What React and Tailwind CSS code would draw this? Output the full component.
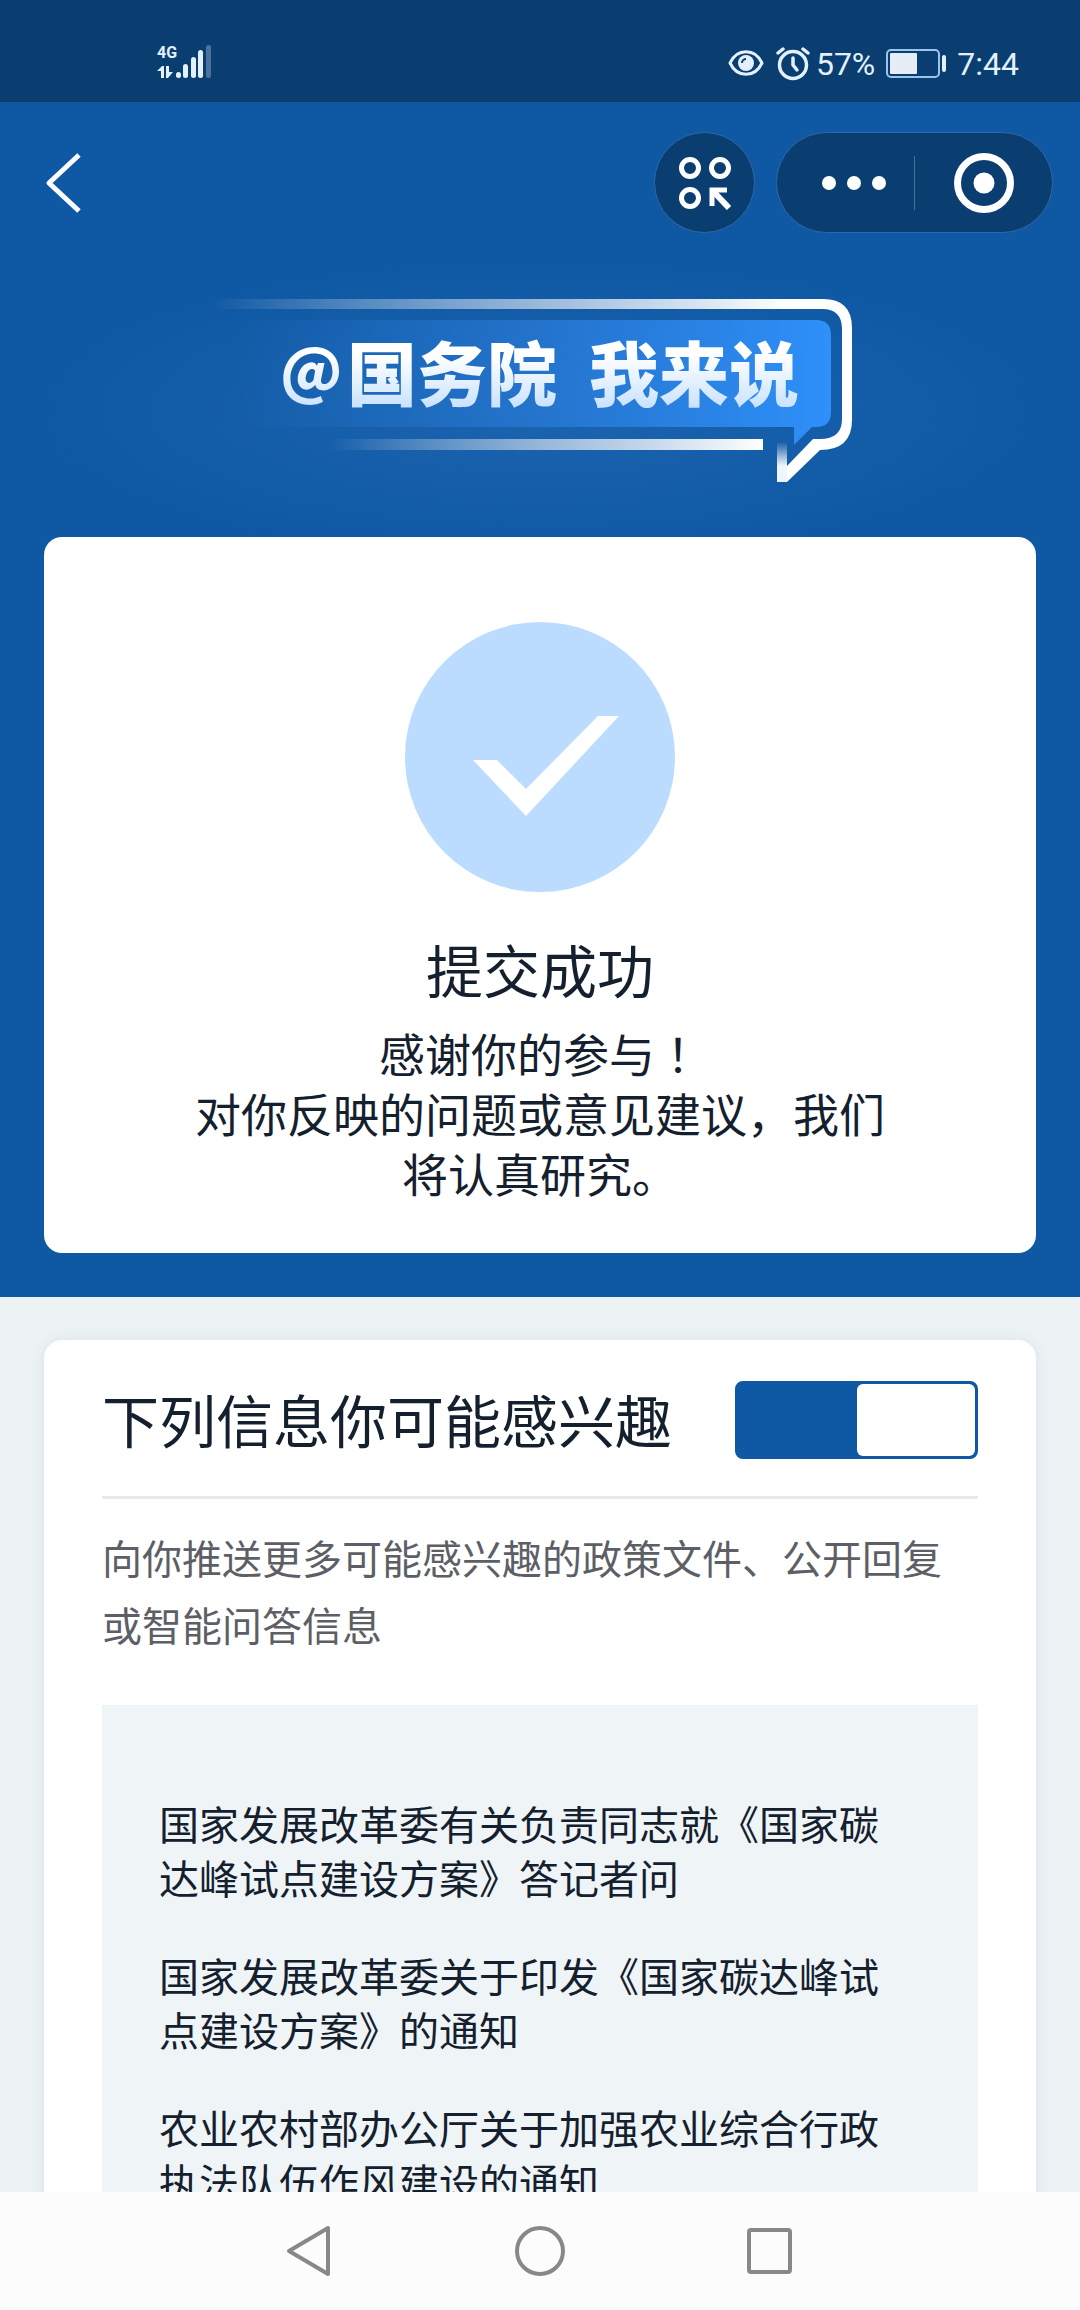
import React from 'react';

const articles = [
  '国家发展改革委有关负责同志就《国家碳达峰试点建设方案》答记者问',
  '国家发展改革委关于印发《国家碳达峰试点建设方案》的通知',
  '农业农村部办公厅关于加强农业综合行政执法队伍作风建设的通知',
];

function SignalIcon() {
  return (
    <svg width="54" height="36" viewBox="0 0 54 36" aria-hidden="true" fill="#e3f0fd">
      <path d="M0 27 L5 22 H7 V34 H4 V27 Z" />
      <path d="M9 22 H12 V28 H16 L11 34 H9 Z" />
      <rect x="19" y="28" width="5" height="6" rx="2.5" />
      <rect x="26" y="20" width="5" height="14" rx="2.5" />
      <rect x="34" y="13" width="5" height="21" rx="2.5" />
      <rect x="41" y="6" width="5" height="28" rx="2.5" />
      <rect x="49" y="1" width="5" height="33" rx="2.5" opacity="0.3" />
    </svg>
  );
}

function StatusBar() {
  return (
    <div className="flex h-[102px] shrink-0 items-start justify-between bg-[#0a3d70] pr-[61px] pl-[157px] font-[Roboto,sans-serif] text-[#e3f0fd]">
      <div className="grid pt-[44px]">
        <span className="col-start-1 row-start-1 text-[16px] leading-[18px] font-bold">4G</span>
        <div className="col-start-1 row-start-1">
          <SignalIcon />
        </div>
      </div>
      <div className="flex items-center pt-[44px] text-[32px] leading-[40px]">
        <svg width="36" height="28" viewBox="0 0 36 28" fill="none" stroke="currentColor" aria-hidden="true">
          <path d="M2 13 C9 -2 27 -2 34 13 C27 28 9 28 2 13 Z" strokeWidth="3" strokeLinejoin="round" />
          <circle cx="18" cy="13" r="8" fill="currentColor" stroke="none" />
          <path d="M14 13 A4 4 0 0 1 18 9" stroke="#0a3d70" strokeWidth="2" />
        </svg>
        <svg className="ml-3" width="34" height="34" viewBox="0 0 34 34" fill="none" stroke="currentColor" strokeLinecap="round" aria-hidden="true">
          <circle cx="17" cy="18" r="13.5" strokeWidth="3.5" />
          <path d="M17 11 V18 L21 23" strokeWidth="3.5" />
          <path d="M2 6 L7 2 M27 2 L32 6" strokeWidth="3.5" />
        </svg>
        <span className="ml-[6px]">57%</span>
        <svg className="ml-[11px]" width="61" height="30" viewBox="0 0 61 30" aria-hidden="true">
          <rect x="1" y="1" width="52" height="27" rx="4" fill="none" stroke="#9cc4ec" strokeWidth="2" />
          <rect x="4" y="4" width="27" height="21" rx="1" fill="#e6edf6" />
          <rect x="56" y="6" width="4" height="17" rx="2" fill="#e3f0fd" />
        </svg>
        <span className="ml-[10px]">7:44</span>
      </div>
    </div>
  );
}

function TitleBar() {
  return (
    <header className="flex items-center justify-between pt-[30px] pr-[27px] pl-[45px]">
      <button type="button" aria-label="返回">
        <svg width="36" height="60" viewBox="0 0 36 60" fill="none" stroke="white" strokeWidth="5" aria-hidden="true">
          <path d="M34 2 L4 30 L34 58" strokeLinejoin="round" />
        </svg>
      </button>
      <div className="flex items-center gap-[21px]">
        <button type="button" aria-label="小程序" className="flex size-[101px] items-center justify-center rounded-full border border-[#2f69a6] bg-[#0a3d70]">
          <svg width="54" height="54" viewBox="0 0 54 54" fill="none" stroke="white" strokeWidth="5" aria-hidden="true">
            <circle cx="12" cy="12" r="8.5" />
            <circle cx="42" cy="12" r="8.5" />
            <circle cx="12" cy="42" r="8.5" />
            <path d="M34 50 V34 H49" strokeWidth="5" />
            <path d="M35 35 L51 52" strokeWidth="6" />
          </svg>
        </button>
        <div className="flex h-[101px] items-center rounded-full border border-[#2f69a6] bg-[#0a3d70]">
          <button type="button" aria-label="更多" className="flex h-full w-[137px] items-center justify-center pl-4">
            <svg width="66" height="16" viewBox="0 0 66 16" fill="white" aria-hidden="true">
              <circle cx="8" cy="8" r="7" />
              <circle cx="33" cy="8" r="7" />
              <circle cx="58" cy="8" r="7" />
            </svg>
          </button>
          <span className="h-[54px] w-px bg-[#47719c]" />
          <button type="button" aria-label="关闭" className="flex h-full w-[137px] items-center justify-center">
            <svg width="60" height="60" viewBox="0 0 60 60" aria-hidden="true">
              <circle cx="30" cy="30" r="26.5" fill="none" stroke="white" strokeWidth="7" />
              <circle cx="30" cy="30" r="10.5" fill="white" />
            </svg>
          </button>
        </div>
      </div>
    </header>
  );
}

function Banner() {
  return (
    <div className="grid justify-center bg-[radial-gradient(ellipse_500px_150px_at_50%_58%,#1c64af_0%,#0f58a4_100%)] pt-[33px] pb-[17px]">
      <svg className="col-start-1 row-start-1" width="660" height="254" viewBox="0 0 660 254" aria-hidden="true">
        <defs>
          <linearGradient id="topLine" gradientUnits="userSpaceOnUse" x1="0" y1="0" x2="642" y2="0">
            <stop offset="0" stopColor="#fff" stopOpacity="0" />
            <stop offset="0.5" stopColor="#dfe8f4" stopOpacity="0.65" />
            <stop offset="0.9" stopColor="#fff" />
          </linearGradient>
          <linearGradient id="bottomLine" x1="0" y1="0" x2="1" y2="0">
            <stop offset="0" stopColor="#fff" stopOpacity="0" />
            <stop offset="0.5" stopColor="#dfe8f4" stopOpacity="0.65" />
            <stop offset="1" stopColor="#fff" />
          </linearGradient>
          <linearGradient id="bubble" gradientUnits="userSpaceOnUse" x1="30" y1="0" x2="620" y2="0">
            <stop offset="0" stopColor="#2173cb" stopOpacity="0" />
            <stop offset="0.5" stopColor="#2677d2" stopOpacity="0.85" />
            <stop offset="1" stopColor="#2f90fa" />
          </linearGradient>
          <linearGradient id="tail" gradientUnits="userSpaceOnUse" x1="0" y1="176" x2="0" y2="200">
            <stop offset="0" stopColor="#fff" stopOpacity="0" />
            <stop offset="1" stopColor="#f0f5fb" />
          </linearGradient>
        </defs>
        <path d="M30 54 H606 Q621 54 621 69 V146 Q621 161 606 161 H602 L584 179 V161 H30 Z" fill="url(#bubble)" />
        <path d="M5 33 H613 Q642 33 642 62 V154 Q642 184 610 184 L577 216 H567 L577 200 L603 173 H610 Q632 173 632 153 V63 Q632 43 612 43 H5 Z" fill="url(#topLine)" />
        <rect x="120" y="173" width="433" height="11" fill="url(#bottomLine)" />
        <path d="M567 174 H577 V203 L577 216 H567 Z" fill="url(#tail)" />
      </svg>
      <h1 className="col-start-1 row-start-1 flex items-center bg-linear-to-b from-white from-35% to-[#c3dfff] to-58% bg-clip-text pb-[44px] pl-[70px] font-['Noto_Sans_CJK_SC',sans-serif] text-[70px] leading-none font-black text-transparent">
        <span className="w-[67px] pb-2 text-[60px]">@</span>
        <span>国务院</span>
        <span className="ml-8">我来说</span>
      </h1>
    </div>
  );
}

function SuccessCard() {
  return (
    <section className="mx-[44px] mb-[44px] rounded-[18px] bg-white px-[140px] pt-[85px] pb-[51px] text-center text-[#14202e]">
      <svg className="mx-auto" width="270" height="270" viewBox="0 0 270 270" aria-hidden="true">
        <circle cx="135" cy="135" r="135" fill="#bbdcff" />
        <path d="M68 138 H92 L121 167 L193 94 H214 L121 194 Z" fill="white" />
      </svg>
      <h2 className="mt-[36px] text-[57px] leading-[80px]">提交成功</h2>
      <p className="mt-[14px] text-[46px] leading-[60px]">
        感谢你的参与<span className="font-['Noto_Sans_CJK_TC',sans-serif]" lang="zh-TW">！</span>
        <br />
        对你反映的问题或意见建议，我们将认真研究。
      </p>
    </section>
  );
}

function InterestCard() {
  return (
    <section className="mx-[44px] mt-[43px] rounded-t-[18px] bg-white px-[58px] shadow-[0_0_14px_rgba(60,80,100,0.1)]">
      <div className="flex items-center justify-between border-b-[3px] border-[#e8e9ea] pt-[41px] pb-[37px]">
        <label htmlFor="interest" className="pb-1 text-[57px] leading-[74px] text-[#14202e]">下列信息你可能感兴趣</label>
        <input
          id="interest"
          type="checkbox"
          role="switch"
          defaultChecked
          className="flex h-[78px] w-[243px] shrink-0 appearance-none rounded-[8px] border-[3px] border-[#0f58a4] bg-[#0f58a4] before:h-full before:w-1/2 before:rounded-[6px] before:bg-white before:content-[''] checked:justify-end"
        />
      </div>
      <p className="pt-[25px] text-[40px] leading-[67px] text-[#5d5f66]">
        向你推送更多可能感兴趣的政策文件、公开回复或智能问答信息
      </p>
      <ul className="mt-[47px] flex flex-col gap-[44px] bg-[#eff4f7] pt-[91px] pr-[80px] pb-[91px] pl-[57px]">
        {articles.map((title) => (
          <li key={title}>
            <a href="#article" className="block text-[40px] leading-[54px] text-[#14202e]">{title}</a>
          </li>
        ))}
      </ul>
    </section>
  );
}

function NavBar() {
  return (
    <nav className="flex h-[118px] shrink-0 items-center justify-center gap-[178px] bg-[#fcfcfc]">
      <button type="button" aria-label="返回">
        <svg width="52" height="52" viewBox="0 0 52 52" fill="none" stroke="#888" strokeWidth="4" strokeLinejoin="round" aria-hidden="true">
          <path d="M44 3 V49 L5 26 Z" />
        </svg>
      </button>
      <button type="button" aria-label="主屏幕">
        <svg width="52" height="52" viewBox="0 0 52 52" fill="none" stroke="#888" strokeWidth="4" aria-hidden="true">
          <circle cx="26" cy="26" r="23" />
        </svg>
      </button>
      <button type="button" aria-label="最近任务">
        <svg width="52" height="52" viewBox="0 0 52 52" fill="none" stroke="#888" strokeWidth="4" aria-hidden="true">
          <rect x="5" y="5" width="41" height="42" rx="2" />
        </svg>
      </button>
    </nav>
  );
}

export default function App() {
  return (
    <div lang="zh-CN" className="flex h-screen flex-col bg-[#edf2f5] font-['Noto_Sans_CJK_SC',sans-serif]">
      <StatusBar />
      <main className="min-h-0 flex-1 overflow-y-auto [scrollbar-width:none]">
        <div className="flow-root bg-[#0f58a4]">
          <TitleBar />
          <Banner />
          <SuccessCard />
        </div>
        <InterestCard />
      </main>
      <NavBar />
    </div>
  );
}
